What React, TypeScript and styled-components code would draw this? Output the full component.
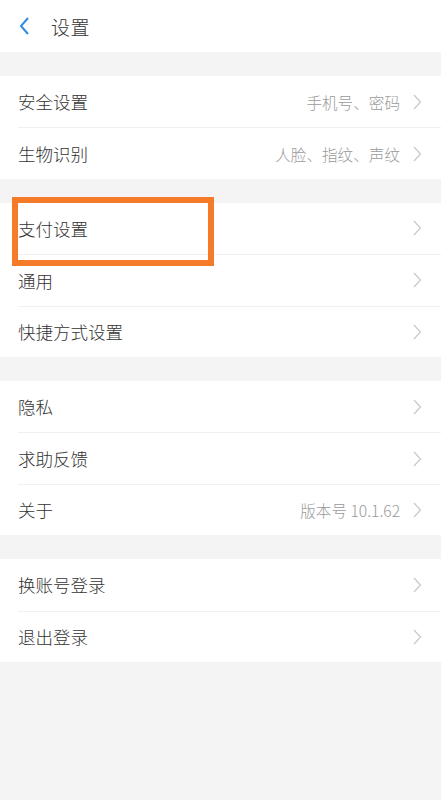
import React from "react";
import { createGlobalStyle, styled } from "styled-components";

const GlobalStyle = createGlobalStyle`
  html, body {
    margin: 0;
    padding: 0;
    background: #f4f4f4;
    font-family: "Noto Sans CJK SC", "Noto Sans", sans-serif;
  }
`;

const Page = styled.div`
  position: relative;
  width: 441px;
  min-height: 800px;
  background: #f4f4f4;
`;

const Header = styled.div`
  height: 52px;
  background: #ffffff;
  display: flex;
  align-items: center;
  padding-left: 18px;
  gap: 19px;
`;

const Title = styled.span`
  font-size: 19px;
  font-weight: 300;
  color: #333333;
  letter-spacing: 0.5px;
`;

const Group = styled.div`
  margin-top: 24px;
  background: #ffffff;
`;

const Row = styled.div`
  height: 51.4px;
  box-sizing: border-box;
  margin-left: 18px;
  padding-right: 19px;
  display: flex;
  align-items: center;
  border-top: 1px solid #f0f0f0;

  &:first-child {
    border-top: none;
  }
`;

const Label = styled.span`
  flex: 1;
  font-size: 17.5px;
  font-weight: 300;
  color: #333333;
`;

const Value = styled.span`
  font-size: 15.6px;
  font-weight: 300;
  color: #9a9a9a;
  margin-right: 13px;
`;

const Highlight = styled.div`
  position: absolute;
  left: 12px;
  top: 197px;
  width: 190px;
  height: 57px;
  border: 6px solid #f57b2b;
`;

function BackIcon() {
  return (
    <svg width="14" height="20" viewBox="0 0 14 20">
      <path d="M10 2 L3 10 L10 18" fill="none" stroke="#2f8ee0" strokeWidth="2" />
    </svg>
  );
}

function ArrowIcon() {
  return (
    <svg width="9" height="16" viewBox="0 0 9 16">
      <path d="M1 1 L7.5 8 L1 15" fill="none" stroke="#c8c8c8" strokeWidth="1.2" />
    </svg>
  );
}

const groups: { label: string; value?: string }[][] = [
  [
    { label: "安全设置", value: "手机号、密码" },
    { label: "生物识别", value: "人脸、指纹、声纹" },
  ],
  [{ label: "支付设置" }, { label: "通用" }, { label: "快捷方式设置" }],
  [{ label: "隐私" }, { label: "求助反馈" }, { label: "关于", value: "版本号 10.1.62" }],
  [{ label: "换账号登录" }, { label: "退出登录" }],
];

function App() {
  return (
    <Page>
      <GlobalStyle />
      <Header>
        <BackIcon />
        <Title>设置</Title>
      </Header>
      {groups.map((group, i) => (
        <Group key={i}>
          {group.map((item) => (
            <Row key={item.label}>
              <Label>{item.label}</Label>
              {item.value && <Value>{item.value}</Value>}
              <ArrowIcon />
            </Row>
          ))}
        </Group>
      ))}
      <Highlight />
    </Page>
  );
}

export default App;
